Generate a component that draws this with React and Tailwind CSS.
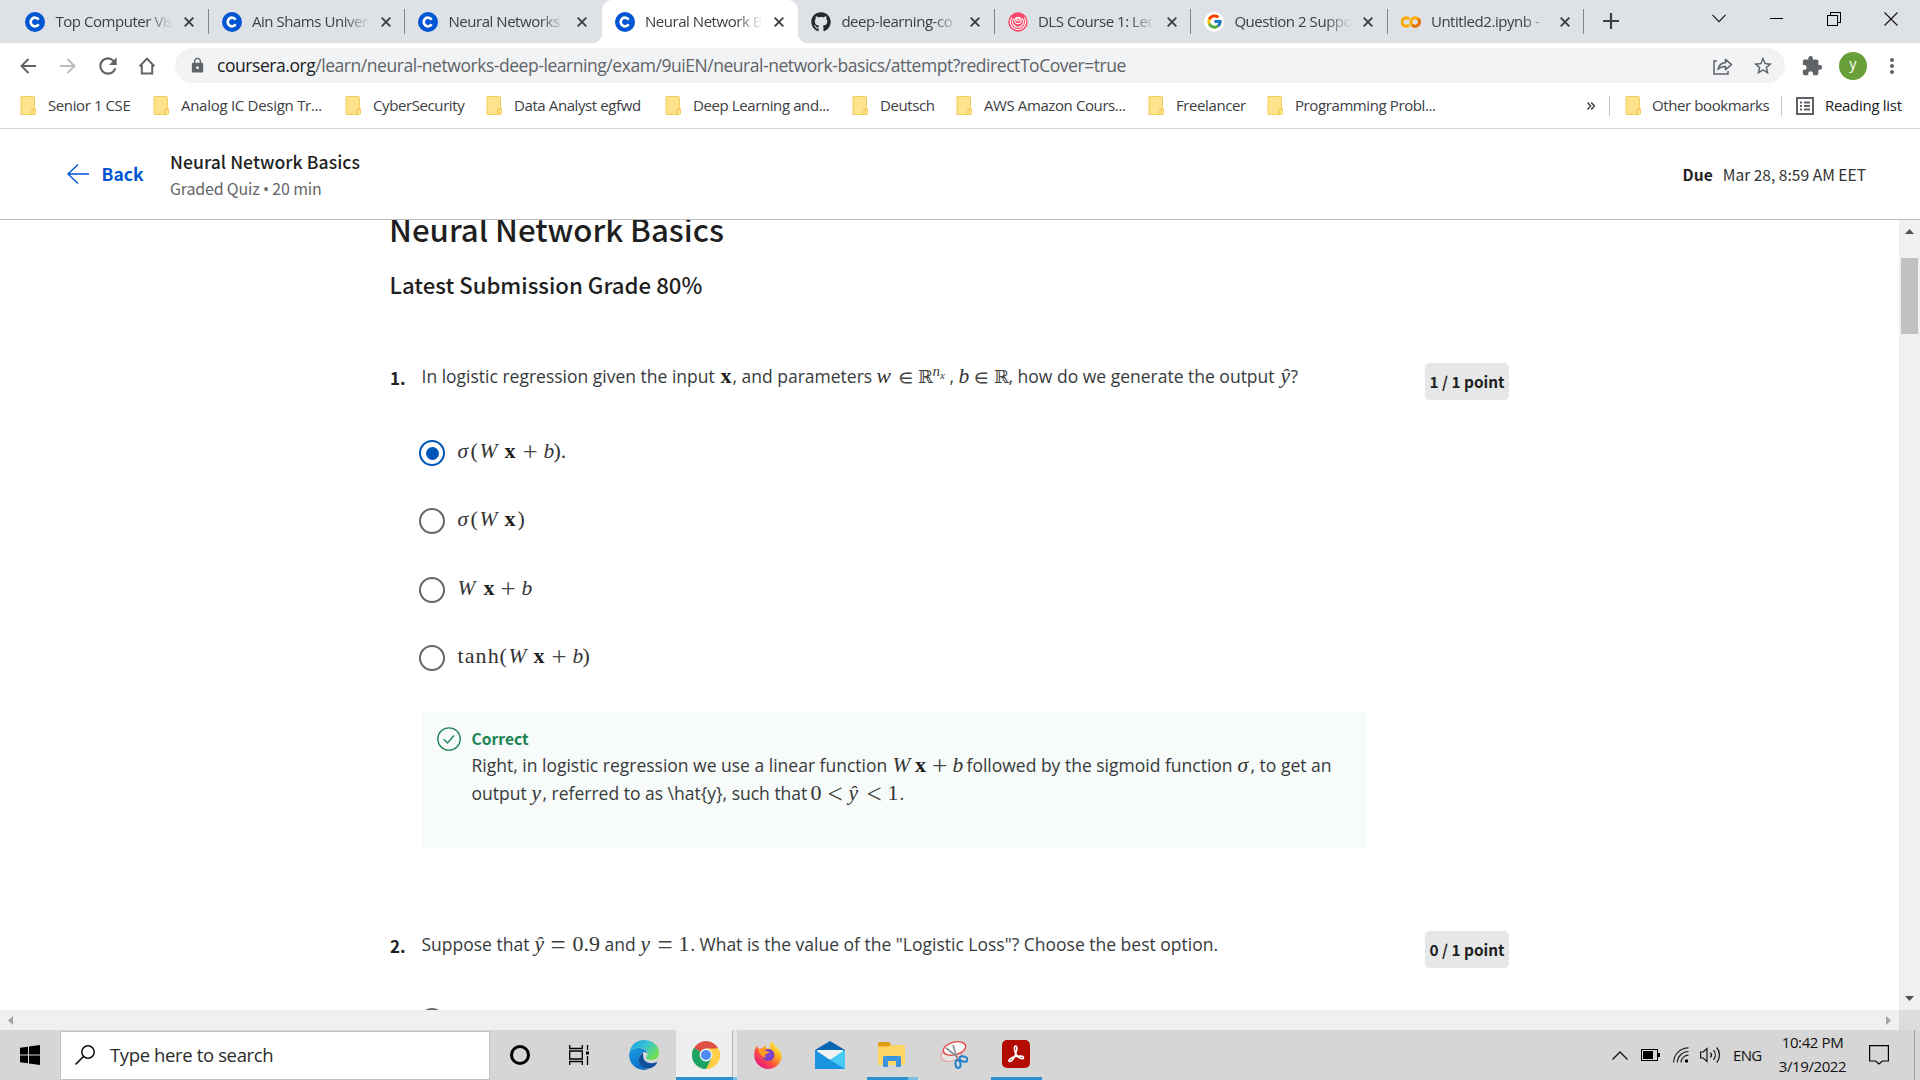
import React from "react";
import { FcGoogle } from "react-icons/fc";
import { FaGithub } from "react-icons/fa";
import {
  MdExtension,
  MdStarBorder,
  MdLock,
  MdRefresh,
  MdMoreVert,
} from "react-icons/md";

const CourseraIcon = () => (
  <svg viewBox="0 0 20 20" className="size-5">
    <circle cx="10" cy="10" r="10" fill="#0056d2" />
    <path d="M13.6 7.7A4.3 4.3 0 1 0 13.6 12.3" fill="none" stroke="#fff" strokeWidth="2.7" />
  </svg>
);

const DlsIcon = () => (
  <svg viewBox="0 0 20 20" className="size-5">
    <circle cx="10" cy="10" r="9.7" fill="#f9486a" />
    <g fill="none" stroke="#fff" strokeWidth="1.1">
      <path d="M3.8 5.5a7.6 7.6 0 1 0 12.4 0" />
      <path d="M5.6 6.6a5.4 5.4 0 1 0 8.8 0" />
      <circle cx="10" cy="8.6" r="3.2" />
      <circle cx="10" cy="7.4" r="1.4" />
    </g>
  </svg>
);

const ColabIcon = () => (
  <svg viewBox="0 0 20 20" className="size-5" fill="none" strokeWidth="3">
    <path d="M8.2 7.2A4.2 4.2 0 1 0 8.2 12.8" stroke="#f9ab00" />
    <circle cx="14.2" cy="10" r="4.2" stroke="#f9ab00" />
    <path d="M17.2 7A4.2 4.2 0 0 1 11.2 13" stroke="#e8710a" />
  </svg>
);

const GoogleIcon = () => (
  <span className="flex size-5 items-center justify-center rounded-full bg-white">
    <FcGoogle size={17} />
  </span>
);

const tabs = [
  { title: "Top Computer Vis", icon: <CourseraIcon />, sep: true },
  { title: "Ain Shams Univer", icon: <CourseraIcon />, sep: true },
  { title: "Neural Networks", icon: <CourseraIcon /> },
  { title: "Neural Network B", icon: <CourseraIcon />, active: true },
  { title: "deep-learning-co", icon: <FaGithub size={20} color="#24292f" />, sep: true },
  { title: "DLS Course 1: Lec", icon: <DlsIcon />, sep: true },
  { title: "Question 2 Suppo", icon: <GoogleIcon />, sep: true },
  { title: "Untitled2.ipynb -", icon: <ColabIcon />, sep: true },
];

const Tab = ({ title, icon, sep, active }) => (
  <div
    className={
      "relative flex h-[43px] w-[196.5px] shrink-0 items-center pl-[13px] " +
      (active ? "rounded-t-[10px] bg-white" : "")
    }
  >
    {active && (
      <>
        <span className="absolute bottom-0 -left-[10px] size-[10px] bg-[radial-gradient(circle_at_0_0,#dee1e6_10px,#fff_10.5px)]" />
        <span className="absolute bottom-0 -right-[10px] size-[10px] bg-[radial-gradient(circle_at_100%_0,#dee1e6_10px,#fff_10.5px)]" />
      </>
    )}
    <span className="flex w-[30px] shrink-0">{icon}</span>
    <span className="w-[120px] pb-px text-[15px] tracking-[-0.450px] whitespace-nowrap text-[#3c4043] [mask-image:linear-gradient(to_right,#000_76%,transparent_98%)]">
      {title}
    </span>
    <svg viewBox="0 0 10 10" className="ml-[9px] size-[10px]" stroke="#3c4043" strokeWidth="1.9">
      <path d="M.7.7l8.6 8.6M9.3.7L.7 9.3" />
    </svg>
    {sep && <span className="absolute top-[9px] right-0 h-[25px] w-px bg-[#808388]" />}
  </div>
);

const TabStrip = () => (
  <div className="flex h-[43px] bg-[#dee1e6] pl-[12.400px]">
    {tabs.map((t) => (
      <Tab key={t.title} {...t} />
    ))}
    <svg viewBox="0 0 16 16" className="mt-[13px] ml-[18.500px] size-4" stroke="#3c4043" strokeWidth="2.2">
      <path d="M8 0v16M0 8h16" />
    </svg>
    <div className="ml-auto flex h-[37px] items-center pr-[22px]" >
      <svg viewBox="0 0 14 9" className="mr-[44px] h-[9px] w-[14px]" fill="none" stroke="#111" strokeWidth="1.1">
        <path d="M.5.8L7 7.6 13.5.8" />
      </svg>
      <span className="mr-[44px] h-px w-[13px] bg-black" />
      <svg viewBox="0 0 14 14" className="mr-[43px] size-[14px]" fill="none" stroke="#000" shapeRendering="crispEdges">
        <path d="M.5 3.5h10v10H.5zM3.5 3.5v-3h10v10h-3" />
      </svg>
      <svg viewBox="0 0 14 14" className="size-[14px]" stroke="#111" strokeWidth="1.1">
        <path d="M.5.5l13 13M13.5.5l-13 13" />
      </svg>
    </div>
  </div>
);

const Toolbar = () => (
  <div className="flex h-[45px] items-center pl-[20px]">
    <svg viewBox="0 0 16 16" className="mr-6 size-4" fill="none" stroke="#5f6368" strokeWidth="2">
      <path d="M16 8H1.5M8.500 1L1.500 8l7 7" />
    </svg>
    <svg viewBox="0 0 16 16" className="mr-[19px] size-4" fill="none" stroke="#babcbe" strokeWidth="2">
      <path d="M0 8h14.5M7.5 1l7 7-7 7" />
    </svg>
    <MdRefresh size={26} color="#5f6368" className="mr-[18px]" />
    <svg viewBox="0 0 16 18" className="h-[18px] w-4" fill="none" stroke="#5f6368" strokeWidth="2">
      <path d="M2.8 8.3V16.500h10.400V8.3M.6 9.3L8 1.6l7.400 7.700" />
    </svg>
    <div className="ml-[20px] flex h-[35px] w-[1610px] items-center rounded-full bg-[#f1f3f4] pr-[11px] pl-[14px]">
      <MdLock size={17} color="#5f6368" />
      <span className="ml-[11px] text-[17.5px] tracking-[-0.45px] whitespace-nowrap text-[#5f6368]">
        <span className="text-[#202124]">coursera.org</span>
        /learn/neural-networks-deep-learning/exam/9uiEN/neural-network-basics/attempt?redirectToCover=true
      </span>
      <svg viewBox="0 0 20 18" className="mr-[19px] ml-auto h-[18px] w-5" fill="none" stroke="#5f6368" strokeWidth="1.5">
        <path d="M4 4H1v13h14v-3" />
        <path d="M5 12.5C5.6 8 8.500 6 12.500 5.800V2.400L18.500 7.600 12.500 12.600V9.400C9.500 9.300 7 10 5 12.500z" strokeLinejoin="round" />
      </svg>
      <MdStarBorder size={22} color="#5f6368" />
    </div>
    <MdExtension size={22} color="#5f6368" className="ml-[16px]" />
    <span className="ml-[16px] flex size-7 items-center justify-center rounded-full bg-[#689f38] pb-[4px] text-[14.500px] text-white">
      y
    </span>
    <MdMoreVert size={24} color="#5f6368" className="ml-[13px]" />
  </div>
);

const Folder = () => (
  <svg viewBox="0 0 16 19" className="h-[19px] w-4 shrink-0">
    <path d="M1 .5h12.500a1 1 0 0 1 1 1V12l1 1v4.500a1 1 0 0 1-1 1H1z" fill="#ffe28c" stroke="#f3cd5d" />
    <path d="M12 18.500V14a1 1 0 0 1 1-1h2.500" fill="none" stroke="#eebf3f" />
  </svg>
);

const bookmarks = [
  ["Senior 1 CSE", "w-[133px]"],
  ["Analog IC Design Tr...", "w-[192px] tracking-[-0.280px]"],
  ["CyberSecurity", "w-[141px]"],
  ["Data Analyst egfwd", "w-[179px]"],
  ["Deep Learning and...", "w-[187px]"],
  ["Deutsch", "w-[104px]"],
  ["AWS Amazon Cours...", "w-[192px]"],
  ["Freelancer", "w-[119px]"],
  ["Programming Probl...", "w-[320px]"],
];

const BookmarksBar = () => (
  <div className="flex h-[41px] items-center border-b border-[#d5d7da] pb-[5px] pl-[20px] text-[15px] tracking-[-0.4px] whitespace-nowrap text-[#3c4043]">
    {bookmarks.map(([name, w]) => (
      <div key={name} className={"flex shrink-0 items-center gap-3 " + w}>
        <Folder />
        {name}
      </div>
    ))}
    <svg viewBox="0 0 8 8" className="size-2" fill="none" stroke="#3c4043" strokeWidth="1.4">
      <path d="M.5.5L3.700 4 .5 7.500M4.200.5L7.400 4 4.200 7.500" />
    </svg>
    <span className="ml-[14px] h-5 w-px bg-[#c4c7cb]" />
    <div className="ml-[15px] flex w-[156px] items-center gap-[11px]">
      <Folder />
      Other bookmarks
    </div>
    <span className="h-5 w-px bg-[#c4c7cb]" />
    <svg viewBox="0 0 18 18" className="mr-[11px] ml-[14px] size-[18px]" fill="none" stroke="#5f6368" strokeWidth="2">
      <path d="M1 1h16v16H1zM4 5.500h2M8 5.500h6M4 9h2M8 9h6M4 12.500h2M8 12.500h6" />
    </svg>
    <span className="tracking-[-0.300px] text-[#202124]">Reading list</span>
  </div>
);

const QuizHeader = () => (
  <div className="flex h-[91px] items-center border-b border-[#bdbdbd] pl-[67px] font-['Noto_Sans_CJK_SC',sans-serif] text-[#1f1f1f]">
    <svg viewBox="0 0 22 20" className="h-5 w-[22px]" fill="none" stroke="#0056d2" strokeWidth="1.4">
      <path d="M22 10H1M11 .5L1 10l10 9.500" />
    </svg>
    <span className="ml-[12.500px] w-[68.500px] text-[17.500px] font-bold text-[#0056d2]">Back</span>
    <div className="flex flex-col pt-[2px] whitespace-nowrap">
      <span className="h-[27px] text-[17.600px] leading-[27px] font-medium tracking-[0.050px]">Neural Network Basics</span>
      <span className="h-[27px] text-[16px] leading-[27px] tracking-[-0.180px] text-[#666]">
        Graded Quiz <span className="font-['Open_Sans',sans-serif]">•</span> 20 min
      </span>
    </div>
    <div className="mr-[54px] ml-auto flex gap-[10px] pt-[2px] text-[15.600px]">
      <span className="font-bold">Due</span>
      <span className="text-[#333]">Mar 28, 8:59 AM EET</span>
    </div>
  </div>
);

/* A run of text that keeps a set width, so that text and formulas line up. */
const Seg = ({ w, children }) => <span className={"inline-block whitespace-pre " + w}>{children}</span>;

const Var = ({ w, children }) => (
  <span className={"inline-block font-['Liberation_Serif',serif] text-[21.500px] leading-none whitespace-pre text-[#333] italic " + w}>
    {children}
  </span>
);

const Sym = ({ w, children }) => (
  <span className={"inline-block font-['Liberation_Serif',serif] text-[22px] leading-none whitespace-pre text-[#333] " + w}>
    {children}
  </span>
);

const Bold = ({ w, children }) => (
  <span className={"inline-block font-['Liberation_Serif',serif] text-[22px] leading-none font-bold whitespace-pre text-[#1f1f1f] " + w}>
    {children}
  </span>
);

const Rel = ({ w, children }) => (
  <span className={"inline-block font-['DejaVu_Math_TeX_Gyre','DejaVu_Serif',serif] text-[18px] leading-none whitespace-pre text-[#444] " + w}>
    {children}
  </span>
);

const Op = ({ w, children }) => (
  <span className={"relative top-[3px] inline-block font-['Liberation_Serif',serif] text-[27px] leading-[16px] tracking-normal whitespace-pre text-[#444] " + w}>
    {children}
  </span>
);

const Radio = ({ checked }) => (
  <span
    className={
      "flex size-[26px] shrink-0 items-center justify-center rounded-full border-[2.500px] bg-white " +
      (checked ? "border-[#0056b8]" : "border-[#666]")
    }
  >
    {checked && <span className="size-[13px] rounded-full bg-[#0056b8]" />}
  </span>
);

const Option = ({ checked, children }) => (
  <div className="flex h-[68.300px] items-center pl-[419px]">
    <Radio checked={checked} />
    <span className="ml-[12.500px] h-[28px] leading-[26px] whitespace-nowrap">{children}</span>
  </div>
);

const Question = ({ number, points, children }) => (
  <div className="flex h-[37px] items-start pl-[390px]">
    <span className="w-[31.500px] font-['Noto_Sans_CJK_SC',sans-serif] text-[17px] leading-[29px] font-bold text-[#1f1f1f]">{number}.</span>
    <span className="w-[1003.500px] text-[17.500px] leading-[26px] whitespace-nowrap">{children}</span>
    <span className="flex h-[37px] w-[84px] items-center justify-center rounded-[5px] bg-[#e5e7e8] font-['Noto_Sans_CJK_SC',sans-serif] text-[15.400px] font-bold whitespace-nowrap text-[#1f1f1f]">
      {points} / 1 point
    </span>
  </div>
);

const Quiz = () => (
  <div className="h-[790px] flex-1 overflow-hidden text-[#373a3c]">
    <div className="-mt-[13px] h-[44px] pl-[389px] font-['Noto_Sans_CJK_SC',sans-serif] text-[31.200px] leading-[44px] font-medium text-[#1f1f1f]">
      Neural Network Basics
    </div>
    <div className="mt-[16px] h-[34px] pl-[389.500px] font-['Noto_Sans_CJK_SC',sans-serif] text-[22.200px] leading-[34px] font-medium text-[#1f1f1f]">
      Latest Submission Grade 80%
    </div>
    <div className="mt-[62px]">
      <Question number="1" points="1">
        <Seg w="w-[299px]">In logistic regression given the input</Seg>
        <Bold w="w-[12px]">x</Bold>
        <Seg w="w-[144px]">, and parameters</Seg>
        <Var w="w-[22px]">w</Var>
        <Rel w="w-[19px]">∈</Rel>
        <Rel w="w-[15px]">ℝ</Rel>
        <span className="inline-block w-[17px] font-['Liberation_Serif',serif] leading-none tracking-normal italic">
          <span className="relative -top-[7px] text-[15px]">n</span>
          <span className="relative -top-[4px] text-[11px]">x</span>
        </span>
        <Seg w="w-[9px]">,</Seg>
        <Var w="w-[15.500px]">b</Var>
        <Rel w="w-[19.500px]">∈</Rel>
        <Rel w="w-[15px]">ℝ</Rel>
        <Seg w="w-[272px]">, how do we generate the output</Seg>
        <Var w="w-[10px]">ŷ</Var>
        <Seg w="w-[10px]">?</Seg>
      </Question>
    </div>
    <div className="mt-[19px]">
      <Option checked>
        <Var w="w-[13px]">σ</Var>
        <Sym w="w-[9px]">(</Sym>
        <Var w="w-[25px]">W</Var>
        <Bold w="w-[18px]">x</Bold>
        <Op w="w-[21px]">+</Op>
        <Var w="w-[10px]">b</Var>
        <Sym w="w-[16px]">).</Sym>
      </Option>
      <Option>
        <Var w="w-[13px]">σ</Var>
        <Sym w="w-[9px]">(</Sym>
        <Var w="w-[25px]">W</Var>
        <Bold w="w-[13px]">x</Bold>
        <Sym w="w-[10px]">)</Sym>
      </Option>
      <Option>
        <Var w="w-[26px]">W</Var>
        <Bold w="w-[17px]">x</Bold>
        <Op w="w-[21px]">+</Op>
        <Var w="w-[10px]">b</Var>
      </Option>
      <Option>
        <span className="tracking-[1.100px]"><Sym w="w-[42px]">tanh</Sym></span>
        <Sym w="w-[9px]">(</Sym>
        <Var w="w-[25px]">W</Var>
        <Bold w="w-[18px]">x</Bold>
        <Op w="w-[21px]">+</Op>
        <Var w="w-[10px]">b</Var>
        <Sym w="w-[10px]">)</Sym>
      </Option>
    </div>
    <div className="mt-[19.800px] ml-[421px] flex h-[136px] w-[945px] bg-[#f7fbf9] pt-[15px] pl-[16px]">
      <svg viewBox="0 0 24 24" className="size-6" fill="none" stroke="#1f8354" strokeWidth="1.300">
        <circle cx="12" cy="12" r="11.200" />
        <path d="M6.800 12.200l3.700 3.800 6.500-7.500" />
      </svg>
      <div className="ml-[10.500px] text-[17.500px] leading-[28px] whitespace-nowrap">
        <div className="h-[24px] font-['Noto_Sans_CJK_SC',sans-serif] text-[15.600px] leading-[23px] font-bold tracking-normal text-[#1f8354]">
          Correct
        </div>
        <div className="h-[28px]">
          <Seg w="w-[421px]">Right, in logistic regression we use a linear function</Seg>
          <Var w="w-[22.500px]">W</Var>
          <Bold w="w-[17px]">x</Bold>
          <Op w="w-[20.500px]">+</Op>
          <Var w="w-[14px]">b</Var>
          <Seg w="w-[271px]">followed by the sigmoid function</Seg>
          <Var w="w-[13px]">σ</Var>
          <Seg w="w-[90px]">, to get an</Seg>
        </div>
        <div className="h-[28px]">
          <Seg w="w-[60px]">output</Seg>
          <Var w="w-[11px]">y</Var>
          <Seg w="w-[268px]">{", referred to as \\hat{y}, such that"}</Seg>
          <Sym w="w-[17px]">0</Sym>
          <Op w="w-[21px]">{"<"}</Op>
          <Var w="w-[18px]">ŷ</Var>
          <Op w="w-[21px]">{"<"}</Op>
          <Sym w="w-[12px]">1</Sym>
          <Seg w="w-[6px]">.</Seg>
        </div>
      </div>
    </div>
    <div className="mt-[83px]">
      <Question number="2" points="0">
        <Seg w="w-[113px]">Suppose that</Seg>
        <Var w="w-[16px]">ŷ</Var>
        <Op w="w-[22px]">=</Op>
        <Sym w="w-[32px]">0.9</Sym>
        <Seg w="w-[36px]">and</Seg>
        <Var w="w-[17px]">y</Var>
        <Op w="w-[21px]">=</Op>
        <Sym w="w-[12px]">1</Sym>
        <Seg w="w-[9px]">.</Seg>
        <Seg w="w-[520px]">{'What is the value of the "Logistic Loss"? Choose the best option.'}</Seg>
      </Question>
    </div>
    <div className="mt-[40px] pl-[419px]">
      <Radio />
    </div>
  </div>
);

const Scrollbars = {
  Vertical: () => (
    <div className="flex h-[790px] w-[21px] flex-col items-center bg-[#f0f0f0] pt-[9px] pb-[9px]">
      <svg viewBox="0 0 9 5" className="h-[5px] w-[9px]"><path d="M0 5L4.500 0 9 5z" fill="#505050" /></svg>
      <span className="mt-[24px] h-[76px] w-[17px] bg-[#c1c1c1]" />
      <svg viewBox="0 0 9 5" className="mt-auto h-[5px] w-[9px]"><path d="M0 0h9L4.500 5z" fill="#505050" /></svg>
    </div>
  ),
  Horizontal: () => (
    <div className="flex h-5 items-center bg-[#f0f0f0] pl-2">
      <svg viewBox="0 0 5 9" className="h-[9px] w-[5px]"><path d="M5 0v9L0 4.500z" fill="#a3a3a3" /></svg>
      <svg viewBox="0 0 5 9" className="mr-[8px] ml-auto h-[9px] w-[5px]"><path d="M0 0v9l5-4.500z" fill="#a3a3a3" /></svg>
      <span className="h-5 w-[21px] bg-[#dcdcdc]" />
    </div>
  ),
};

const EdgeIcon = () => (
  <svg viewBox="0 0 30 30" className="size-[30px]">
    <defs>
      <linearGradient id="edgeTop" x1="0" y1="0" x2="1" y2="0.600">
        <stop offset="0" stopColor="#1a9be0" />
        <stop offset="0.500" stopColor="#35c1d8" />
        <stop offset="1" stopColor="#6fe052" />
      </linearGradient>
      <linearGradient id="edgeLeft" x1="0" y1="0" x2="0.600" y2="1">
        <stop offset="0" stopColor="#1b9de2" />
        <stop offset="1" stopColor="#0a6bc4" />
      </linearGradient>
    </defs>
    <path d="M.5 13C1.500 5 7.500 0 15 0c8.500 0 15 5.500 15 12.500 0 5-3.500 7.500-8 7.500-3.500 0-5-1-5-2 0-.8 1.500-1.500 1.500-4C18.500 10 14 7.500 9.500 8 5 8.300 2 10.500.5 13z" fill="url(#edgeTop)" />
    <path d="M.2 13.500C2 10 6 7.800 10.500 8c4 .2 7.500 2.700 8 5.500-1-1.300-3-1.700-4.500-1C9.500 14.500 8.500 20 12 25c1.500 2.200 4 4 7 4.300C9.500 32-.8 25 .2 13.500z" fill="url(#edgeLeft)" />
    <path d="M14 12.500c-5 3-5.500 9-2 13 4.500 5.500 12.500 3.500 16-2.500.4-.8-.2-1.200-1-.8-5 2.300-11.500.5-12.500-4.200-.5-2.300-.5-4-.5-5.500z" fill="#0f4f9e" />
  </svg>
);

const ChromeIcon = () => (
  <svg viewBox="0 0 28 28" className="size-7">
    <path d="M14 14L1.900 7A14 14 0 0 1 26.100 7z" fill="#dd5144" />
    <path d="M14 14L26.100 7A14 14 0 0 1 14 28z" fill="#ffcd46" />
    <path d="M14 14V28A14 14 0 0 1 1.900 7z" fill="#1da362" />
    <path d="M14 7.600h12.400A14 14 0 0 1 14 28l5.500-10.800z" fill="#ffcd46" />
    <path d="M8.500 17.200L1.900 7A14 14 0 0 0 14 28l5.500-10.800z" fill="#1da362" />
    <circle cx="14" cy="14" r="6.400" fill="#f1f1f1" />
    <circle cx="14" cy="14" r="5" fill="#4c8bf5" />
  </svg>
);

const FirefoxIcon = () => (
  <svg viewBox="0 0 28 28" className="size-7">
    <defs>
      <linearGradient id="fox" x1="0.900" y1="0.100" x2="0.200" y2="0.950">
        <stop offset="0" stopColor="#fff14a" />
        <stop offset="0.350" stopColor="#ffae22" />
        <stop offset="0.650" stopColor="#ff4f3f" />
        <stop offset="1" stopColor="#e3148c" />
      </linearGradient>
      <radialGradient id="globe"><stop offset="0" stopColor="#8a45d8" /><stop offset="1" stopColor="#6b3fc4" /></radialGradient>
    </defs>
    <path d="M3.500 4.500c0 1.500.3 2.500 1.200 3.500 1-.8 2.300-1 3.800-.8 1-1.600 2.300-2.400 3.500-2.700-.6 1.300-.5 2 .3 2.600 1.500-.2 3 .1 4.200.7-1.400-3-.5-6 1.500-7.800.8 3 3 4.200 5 6.500 3.500 3.500 4.800 6.500 4.800 9A13.800 13.800 0 0 1 .3 15C.1 10.500 1 7 3.500 4.500z" fill="url(#fox)" />
    <circle cx="14.300" cy="14" r="6" fill="url(#globe)" />
    <path d="M4 9c2.500-2 6-1.500 7.500 1 1.500.5 2.800.6 3.800.6-.4 1.700-2 2.200-3.700 2.700-.8.700-.4 2.200.2 3.500-3.600-.6-6.300-3.800-7.800-7.800z" fill="#ff9b22" />
  </svg>
);

const MailIcon = () => (
  <svg viewBox="0 0 30 28" className="h-7 w-[30px]">
    <path d="M0 9L15 0l15 9v5H0z" fill="#0a64b4" />
    <path d="M2 9h26v9H2z" fill="#f2f2f2" />
    <path d="M0 9l15 10L30 9v19H0z" fill="#28b1ea" />
    <path d="M30 9L15 19l15 9z" fill="#47cbf5" />
    <path d="M0 9v19h30L15 19z" fill="#1c93de" />
  </svg>
);

const ExplorerIcon = () => (
  <svg viewBox="0 0 28 26" className="h-[26px] w-7">
    <path d="M0 1.500A1.500 1.500 0 0 1 1.500 0H11l2 2.500V6H0z" fill="#dd9c0c" />
    <path d="M0 4.500h10l3-1.500h14v19a1 1 0 0 1-1 1H1a1 1 0 0 1-1-1z" fill="#ffd565" />
    <path d="M5 25V15.500A1.500 1.500 0 0 1 6.500 14h15a1.500 1.500 0 0 1 1.500 1.500V25h-5v-6h-8v6z" fill="#3c94dc" />
  </svg>
);

const SnipIcon = () => (
  <svg viewBox="0 0 28 28" className="size-7" fill="none">
    <ellipse cx="11.500" cy="13" rx="11" ry="6.800" transform="rotate(-20 11.500 13)" stroke="#e59a9a" fill="#e6e2e2" />
    <ellipse cx="14.500" cy="7.500" rx="11.500" ry="6.300" transform="rotate(-15 14.500 7.500)" stroke="#e64545" strokeWidth="1.300" fill="#fafafa" />
    <path d="M6 7l12 9.500M13 4l4 13" stroke="#8b8f94" strokeWidth="1.600" />
    <ellipse cx="23.500" cy="18" rx="4" ry="2.500" transform="rotate(15 23.500 18)" stroke="#1f82c8" strokeWidth="2" />
    <ellipse cx="18" cy="23" rx="2.500" ry="4" transform="rotate(-5 18 23)" stroke="#1f82c8" strokeWidth="2" />
  </svg>
);

const AcrobatIcon = () => (
  <svg viewBox="0 0 28 28" className="size-7">
    <rect width="28" height="28" rx="5" fill="#b30b00" />
    <path d="M13.500 6c2 0 1.500 4.500.2 8-1.300 3.700-4 7.500-6 7.500-2.700-.8 1.300-4 5.800-5 3.600-.8 8-.6 8 1.200 0 2-4 .8-6.500-2-2.400-2.700-3.500-9.700-1.500-9.700z" fill="none" stroke="#fff" strokeWidth="1.600" />
  </svg>
);

const Tray = () => (
  <div className="ml-auto flex h-[50px] items-center text-[#111]">
    <svg viewBox="0 0 16 9" className="mr-[13px] h-[9px] w-4" fill="none" stroke="#111" strokeWidth="1.300">
      <path d="M.5 8.500L8 1l7.500 7.500" />
    </svg>
    <svg viewBox="0 0 19 12" className="mr-[13px] h-3 w-[19px]" shapeRendering="crispEdges">
      <path d="M.5.500h16v10.500H.5z" fill="none" stroke="#000" />
      <path d="M2 2h10v7.500H2zM17 4h2v4h-2z" fill="#000" />
    </svg>
    <svg viewBox="0 0 16 16" className="mr-[11px] size-4" fill="none" stroke="#222" strokeWidth="1.200">
      <path d="M.6 15.500A15 15 0 0 1 15.500.8M4.300 15.500A11.200 11.200 0 0 1 15.500 4.500M8 15.500a7.500 7.500 0 0 1 7.500-7.300" />
      <circle cx="13.500" cy="14" r="1.700" fill="#000" stroke="none" />
    </svg>
    <svg viewBox="0 0 21 18" className="mr-[12px] h-[18px] w-[21px]" fill="none" stroke="#111" strokeWidth="1.200">
      <path d="M.6 6v6h2.600L7 15.500v-13L3.200 6zM10.500 6.500a4 4 0 0 1 0 5M13.500 4.200a7.500 7.500 0 0 1 0 9.600M16.700 1.500a11.500 11.500 0 0 1 0 15" />
    </svg>
    <span className="w-[45px] text-[15px] tracking-[-0.700px]">ENG</span>
    <div className="w-[69px] pb-[2px] text-center text-[15px] leading-6 tracking-[-0.400px] whitespace-nowrap">
      <div>10:42 PM</div>
      <div>3/19/2022</div>
    </div>
    <svg viewBox="0 0 20 20" className="mr-[25px] ml-[22px] size-5" fill="none" stroke="#000" strokeWidth="1.200">
      <path d="M.6.6h18.800v15.400h-6L10 19l-3.400-3H.6z" />
    </svg>
    <span className="mr-[5px] h-[50px] w-px bg-[#a2a2a2]" />
  </div>
);

const Taskbar = () => (
  <div className="flex h-[50px] items-center bg-[#d6d6d6]">
    <svg viewBox="0 0 20 20" className="mx-[20px] size-5">
      <path d="M0 2.800L8 1.700V9.500H0zM9 1.500L20 0v9.500H9zM0 10.500h8v7.800L0 17.200zM9 10.500h11V20L9 18.500z" />
    </svg>
    <div className="flex h-[49px] w-[430px] items-center border border-[#c3c3c3] bg-white pl-[14px]">
      <svg viewBox="0 0 20 20" className="size-5" fill="none" stroke="#111" strokeWidth="1.500">
        <circle cx="13" cy="7" r="6.200" />
        <path d="M8.600 11.400L.6 19.400" />
      </svg>
      <span className="ml-[15px] text-[18.500px] tracking-[-0.370px] text-[#2b2b2b]">Type here to search</span>
    </div>
    <span className="ml-[20px] size-5 rounded-full border-[3px] border-black" />
    <svg viewBox="0 0 21 20" className="ml-[39px] h-5 w-[21px]" fill="none" stroke="#000" strokeWidth="1.300">
      <path d="M.7 0v3.500h12.600V0M.7 6h12.600v8H.7zM.7 20v-3.500h12.600V20M18.500 0v5M18.500 11v9" />
      <path d="M17 6.500h3v3h-3z" fill="#000" stroke="none" />
    </svg>
    <span className="mr-[17px] ml-[39px]"><EdgeIcon /></span>
    <div className="flex h-[50px] w-[56px] items-center justify-center border-b-[3px] border-[#2a93cf] bg-[#efefef] pl-[3px]">
      <span className="pt-[2px]"><ChromeIcon /></span>
    </div>
    <span className="h-[50px] w-px border-b-[3px] border-[#2a93cf] bg-[#b5b5b5]" />
    <span className="mr-[17px] h-[50px] w-[4px] border-b-[3px] border-[#7fc0e2] bg-[#e6e6e6]" />
    <FirefoxIcon />
    <span className="mr-[22px] ml-[33px]"><MailIcon /></span>
    <div className="flex h-[50px] w-[41px] items-center border-b-[3px] border-[#2a93cf] pt-[2px] pl-[11px]">
      <ExplorerIcon />
    </div>
    <span className="h-[50px] w-[10px] border-b-[3px] border-[#7fc0e2]" />
    <span className="ml-[22px]"><SnipIcon /></span>
    <div className="ml-[23px] flex h-[50px] w-[51px] items-center justify-center border-b-[3px] border-[#2a93cf] pt-px pr-px">
      <AcrobatIcon />
    </div>
    <Tray />
  </div>
);

export default function App() {
  return (
    <div className="h-[1080px] w-[1920px] overflow-hidden bg-white font-['Open_Sans','Noto_Sans',sans-serif]">
      <TabStrip />
      <Toolbar />
      <BookmarksBar />
      <QuizHeader />
      <div className="flex">
        <Quiz />
        <Scrollbars.Vertical />
      </div>
      <Scrollbars.Horizontal />
      <Taskbar />
    </div>
  );
}
